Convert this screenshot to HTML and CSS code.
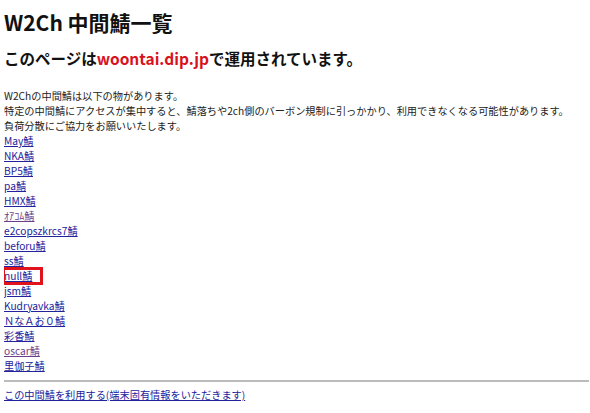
FILE: index.html
```html
<!DOCTYPE html>
<html lang="ja">
<head>
    <meta charset="UTF-8">
    <meta name="viewport" content="width=device-width, initial-scale=1.0">
    <title>W2Ch 中間鯖一覧</title>

    <link rel="stylesheet" href="styles.css">
</head>
<body>

    <h1>W2Ch 中間鯖一覧</h1>
    <h2>このページは<span class="host">woontai.dip.jp</span>で運用されています。</h2>

    <p class="intro">
        W2Chの中間鯖は以下の物があります。<br>
        特定の中間鯖にアクセスが集中すると、鯖落ちや2ch側のバーボン規制に引っかかり、利用できなくなる可能性があります。<br>
        負荷分散にご協力をお願いいたします。
    </p>

    <!-- 中間鯖の一覧 -->
    <ul class="servers">
        <li><a href="#may">May鯖</a></li>
        <li><a href="#nka">NKA鯖</a></li>
        <li><a href="#bp5">BP5鯖</a></li>
        <li><a href="#pa">pa鯖</a></li>
        <li><a href="#hmx">HMX鯖</a></li>
        <li><a class="visited" href="#ocom">ｵｱｺﾑ鯖</a></li>
        <li><a href="#e2">e2copszkrcs7鯖</a></li>
        <li><a href="#beforu">beforu鯖</a></li>
        <li><a href="#ss">ss鯖</a></li>
        <li><span class="marked"><a href="#null">null鯖</a></span></li>
        <li><a href="#jsm">jsm鯖</a></li>
        <li><a href="#kud">Kudryavka鯖</a></li>
        <li><a href="#nao">ＮなＡお０鯖</a></li>
        <li><a href="#ayaka">彩香鯖</a></li>
        <li><a class="visited" href="#oscar">oscar鯖</a></li>
        <li><a href="#rikako">里伽子鯖</a></li>
    </ul>

    <hr>

    <a href="#use">この中間鯖を利用する(端末固有情報をいただきます)</a>

</body>
</html>
```

FILE: styles.css
```css
body {
    font-family: "Noto Sans CJK JP", "Noto Sans", sans-serif;
    font-size: 10.2px;
    line-height: 15px;
    color: #222;
    background-color: #fff;
    margin: 0 1px 0 4px;
}

h1 {
    font-size: 21px;
    line-height: 28px;
    font-weight: bold;
    color: #111;
    margin: 8px 0 0;
}

h2 {
    font-size: 15.5px;
    line-height: 22px;
    font-weight: bold;
    color: #111;
    margin: 11px 0 0;
}

.host {
    color: #d8121c;
}

.intro {
    margin: 19px 0 0;
}

a {
    color: #22229c;
    text-decoration: underline;
}

a.visited {
    color: #6b3f8c;
}

.servers {
    list-style: none;
    margin: 0;
    padding: 0;
}

.marked {
    position: relative;
}

/* 赤枠で囲む */
.marked::after {
    content: "";
    position: absolute;
    left: -2px;
    top: -1px;
    width: 41px;
    height: 18px;
    border: 3px solid #e0131c;
    box-sizing: border-box;
}

hr {
    border: none;
    border-top: 2px solid #bbb;
    margin: 7px 0 5px;
}
```
